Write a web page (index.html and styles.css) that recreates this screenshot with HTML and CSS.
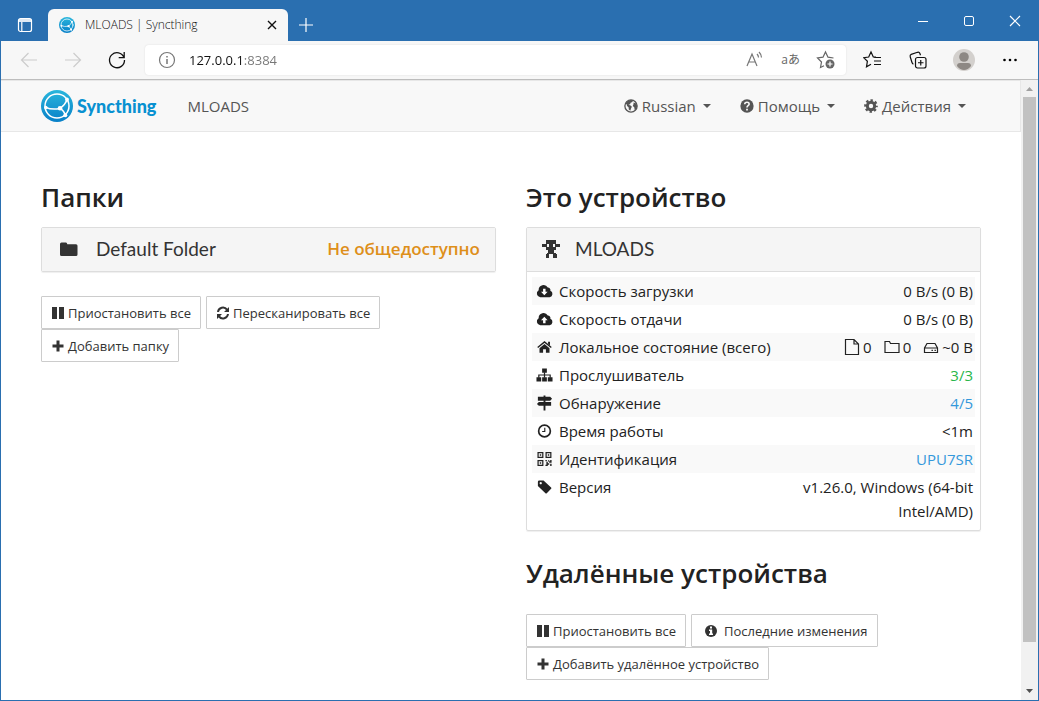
FILE: index.html
```html
<!DOCTYPE html>
<html lang="ru">
<head>
<meta charset="utf-8">
<title>MLOADS | Syncthing</title>
<link rel="stylesheet" href="styles.css">
</head>
<body>
<svg class="defs" aria-hidden="true">
  <defs>
    <linearGradient id="brand-fill" x1="0" y1="0" x2="0" y2="1"><stop offset="0" stop-color="#29b6dc"/><stop offset="1" stop-color="#0880c8"/></linearGradient>
  </defs>
  <symbol id="logo" viewBox="0 0 32 32">
    <circle cx="16" cy="16" r="16" fill="url(#brand-fill)"/>
    <g fill="none" stroke="#fff" stroke-width="1.500" stroke-linecap="round">
      <circle cx="16" cy="16" r="12"/>
      <path d="M19 18.500Q24 15 26.300 9.500M19 18.500Q11 20 4.800 17.500M19 18.500q4 2 5.500 7"/>
    </g>
    <g fill="#fff"><circle cx="19" cy="18.300" r="2.300"/><circle cx="26" cy="9.500" r="1.900"/><circle cx="24.300" cy="25.300" r="2"/><circle cx="4.800" cy="17.500" r="1.800"/></g>
  </symbol>
  <symbol id="globe" viewBox="0 0 16 16"><circle cx="8" cy="8" r="7" fill="none" stroke="currentColor" stroke-width="1.500"/><path d="M4 2.500 7.500 1l3 .5-1 2-2 .7-.5 1.800-2 .5 2.500.8 1.500 1.500-1 2-.8 2.700L5.500 12l-.3-2.500L3.500 8 3 6 1.600 5.500zM11 4l3 1 1 3-.8 3-2 1.500-.5-3L10 8l.8-2z" fill="currentColor"/></symbol>
  <symbol id="help" viewBox="0 0 16 16"><circle cx="8" cy="8" r="7.600" fill="currentColor"/><path d="M5.400 6c.2-3.200 5.200-3 5 0C10.300 7.600 8 7.800 8 9.600" fill="none" stroke="#f8f8f8" stroke-width="1.900"/><path d="M7 11h2v2H7z" fill="#f8f8f8"/></symbol>
  <symbol id="gear" viewBox="0 0 16 16"><circle cx="8" cy="8" r="4.200" fill="none" stroke="currentColor" stroke-width="3.400"/><circle cx="8" cy="8" r="6.500" fill="none" stroke="currentColor" stroke-width="2.600" stroke-dasharray="2.700 2.405" stroke-dashoffset="1.350"/></symbol>
  <symbol id="caret" viewBox="0 0 8 4"><path d="M0 0h8L4 4z" fill="currentColor"/></symbol>
  <symbol id="folder" viewBox="0 0 18 16"><path d="M0 3Q0 1.500 1.500 1.500h4.500Q7 1.500 7.300 3.200H16q1.500 0 1.500 1.500V13.500Q17.500 15 16 15H1.500Q0 15 0 13.500z" fill="currentColor"/></symbol>
  <symbol id="pause" viewBox="0 0 14 14"><path d="M1 1h5v12H1zM8 1h5v12H8z" fill="currentColor"/></symbol>
  <symbol id="refresh" viewBox="0 0 14 14"><path d="M2 6a5 5 0 0 1 9-2.400M12 8a5 5 0 0 1-9 2.400" fill="none" stroke="currentColor" stroke-width="2"/><path d="M13 1v5H8zM1 13V8h5z" fill="currentColor"/></symbol>
  <symbol id="plus" viewBox="0 0 14 14"><path d="M5.500 1.500h3v4h4v3h-4v4h-3v-4h-4v-3h4z" fill="currentColor"/></symbol>
  <symbol id="info" viewBox="0 0 14 14"><circle cx="7" cy="7" r="6" fill="currentColor"/><path d="M6 2.500h2v2H6zM5 5.500h3.200v4H9V11H5V9.500h1V7H5z" fill="#fff"/></symbol>
  <symbol id="identicon" viewBox="0 0 18 18" shape-rendering="crispEdges"><path d="M4 0h10v4h4v3h-4v3h-2v3h2v1h1v4h-4v-4H7v4H4v-4h1v-1h1v-3H4V7H0V4h4z" fill="currentColor"/><path d="M5 4h2v3H5zM11 4h2v3h-2z" fill="#f5f5f5"/></symbol>
  <symbol id="cloud-down" viewBox="0 0 18 16"><path d="M4.500 14.500a4 4 0 0 1-1.700-7.400 5.200 5.200 0 0 1 9.700-2.700 2.700 2.700 0 0 1 2.700 3.400 3.500 3.500 0 0 1-.7 6.700z" fill="currentColor"/><path d="M7.500 5.500h2.600v3.300h2.200L8.800 12.500 5.300 8.800h2.200z" fill="#fff"/></symbol>
  <symbol id="cloud-up" viewBox="0 0 18 16"><path d="M4.500 14.500a4 4 0 0 1-1.700-7.400 5.200 5.200 0 0 1 9.700-2.700 2.700 2.700 0 0 1 2.700 3.400 3.500 3.500 0 0 1-.7 6.700z" fill="currentColor"/><path d="M7.500 12.500h2.600V9.200h2.200L8.800 5.500 5.300 9.200h2.200z" fill="#fff"/></symbol>
  <symbol id="home" viewBox="0 0 18 16"><path d="M1.800 8.600 9 2.600l7.200 6" fill="none" stroke="currentColor" stroke-width="1.500"/><path d="M12.800 2.500h2v4l-2-1.600zM9 4.800l5.300 4.400V14h-3.800v-3.600h-3V14H3.700V9.200z" fill="currentColor"/></symbol>
  <symbol id="sitemap" viewBox="0 0 18 16"><path d="M6.500 1h5v4.500h-5zM.5 10.500h5V15h-5zM6.500 10.500h5V15h-5zM12.500 10.500h5V15h-5z" fill="currentColor"/><path d="M9 5v6M3 11V8h12v3" fill="none" stroke="currentColor" stroke-width="1.300"/></symbol>
  <symbol id="signs" viewBox="0 0 18 16"><path d="M8 0h2v1.500h5L17 3.500l-2 2h-5V7h6v4h-6v5H8v-5H3L1 9l2-2h5V5.500H2v-4h6z" fill="currentColor"/></symbol>
  <symbol id="clock" viewBox="0 0 18 16"><circle cx="9" cy="8" r="6.200" fill="none" stroke="currentColor" stroke-width="1.800"/><path d="M9.300 4.500v4H6.500" fill="none" stroke="currentColor" stroke-width="1.200"/></symbol>
  <symbol id="qr" viewBox="0 0 18 16"><path d="M2.200 1.200h5v5h-5zM10.700 1.200h5v5h-5zM2.200 9.700h5v5h-5z" fill="none" stroke="currentColor" stroke-width="1.300"/><path d="M4 3h1.500v1.500H4zM12.500 3H14v1.500h-1.500zM4 11.500h1.500V13H4zM10 9h1.500v1.500H10zM13 9h1v1.500h1V9h1.500v3H14v-1h-1zM11 11h1.500v1.500H14V14h-1.500v1.300H10V14h1zM15 13h1.500v2.300H15z" fill="currentColor"/></symbol>
  <symbol id="tag" viewBox="0 0 18 16"><path fill-rule="evenodd" d="M2 2.500Q2 1 3.500 1H8l8 7.500q.7.700 0 1.400l-4.600 4.700q-.7.700-1.400 0L2 7zM5 2.700a1.200 1.200 0 1 0 .01 0z" fill="currentColor"/></symbol>
  <symbol id="file-o" viewBox="0 0 16 18"><path d="M1.500 1.500h8.500L14.500 6v10.500h-13zM10 1.500V6h4.500" fill="none" stroke="currentColor" stroke-width="1.200"/></symbol>
  <symbol id="folder-o" viewBox="0 0 16 18"><path d="M1 14.500V3.500h4.500l1 2h8.500v9z" fill="none" stroke="currentColor" stroke-width="1.200"/></symbol>
  <symbol id="disk-o" viewBox="0 0 16 18"><path d="M1.500 14.500V10L4 5.500h8L14.500 10v4.500zM1.500 10h13" fill="none" stroke="currentColor" stroke-width="1.200"/><path d="M8.500 11.700h1.400v1.400H8.500zM11.500 11.700h1.400v1.400h-1.400z" fill="currentColor"/></symbol>
  <symbol id="triangle" viewBox="0 0 7 4"><path d="M0 4h7L3.500 0z" fill="currentColor"/></symbol>
</svg>

<div class="window">
  <header class="titlebar">
    <button class="tab-actions" aria-label="Меню вкладок"><svg viewBox="0 0 16 16"><rect x="1.500" y="1.500" width="13" height="13" rx="2" fill="none" stroke="#fff" stroke-width="1.200"/><path d="M2 2h12v3H2z" fill="#fff" opacity=".85"/><path d="M4.800 5v9" stroke="#fff" stroke-width="1.200"/></svg></button>
    <div class="tab">
      <svg class="tab-logo"><use href="#logo"/></svg>
      <span class="tab-title">MLOADS | Syncthing</span>
      <button aria-label="Закрыть вкладку"><svg viewBox="0 0 16 16"><path d="M4 4l8 8M12 4l-8 8" stroke="#111" stroke-width="1.400"/></svg></button>
    </div>
    <button class="new-tab" aria-label="Новая вкладка"><svg viewBox="0 0 16 16"><path d="M8 1v14M1 8h14" stroke="#fff" stroke-width="1.200"/></svg></button>
    <div class="window-controls">
      <button aria-label="Свернуть"><svg viewBox="0 0 16 16"><path d="M3 8.500h10" stroke="#fff"/></svg></button>
      <button aria-label="Развернуть"><svg viewBox="0 0 16 16"><rect x="3.500" y="3.500" width="9" height="9" rx="1.500" fill="none" stroke="#fff"/></svg></button>
      <button aria-label="Закрыть"><svg viewBox="0 0 16 16"><path d="M3 3l10 10M13 3 3 13" stroke="#fff" stroke-width="1.200"/></svg></button>
    </div>
  </header>

  <div class="toolbar">
    <div class="history">
      <button aria-label="Назад" disabled><svg viewBox="0 0 20 20"><path d="M18 10H2.500M9.500 3l-7 7 7 7" fill="none" stroke="#ccc" stroke-width="1.200"/></svg></button>
      <button aria-label="Вперёд" disabled><svg viewBox="0 0 20 20"><path d="M2 10h15.500M10.500 3l7 7-7 7" fill="none" stroke="#ccc" stroke-width="1.200"/></svg></button>
      <button aria-label="Обновить"><svg viewBox="0 0 20 20"><path d="M17 7.500A7.500 7.500 0 1 0 17.500 10M17.200 2v5.700h-5.500" fill="none" stroke="#111" stroke-width="1.300"/></svg></button>
    </div>
    <div class="address">
      <svg viewBox="0 0 20 20"><circle cx="10" cy="10" r="7.500" fill="none" stroke="#777" stroke-width="1.200"/><path d="M10 9v5M10 6v1.500" stroke="#777" stroke-width="1.500"/></svg>
      <input type="text" value="127.0.0.1:8384" aria-label="Адресная строка">
      <button aria-label="Прочесть вслух"><svg viewBox="0 0 20 20"><path d="M2 16 7 4 12 16M4 12h6M12 4q1.500 1.500 1.500 3.500M14 2q2.500 2.500 2.500 5.500" fill="none" stroke="#777" stroke-width="1.200"/></svg></button>
      <button class="translate" aria-label="Перевести">aあ</button>
      <button aria-label="Добавить в избранное"><svg viewBox="0 0 20 20"><path d="M17.500 8 12 7.200 9.500 2 7 7.200 1.500 8l4 4-1 5.500L8 15.700" fill="none" stroke="#666" stroke-width="1.200"/><circle cx="14" cy="14" r="4.500" fill="#666"/><path d="M14 11.500v5M11.500 14h5" stroke="#fff" stroke-width="1.200"/></svg></button>
    </div>
    <div class="browser-actions">
      <button aria-label="Избранное"><svg viewBox="0 0 20 20"><path d="M13 7.200 10.300 7 8 2 5.700 7l-5 .7 3.700 3.500-.9 5.600L8 14.200M11 7.500h7M11 11h7M11 14.500h7" fill="none" stroke="#111" stroke-width="1.200"/></svg></button>
      <button aria-label="Коллекции"><svg viewBox="0 0 20 20"><rect x="7.500" y="7.500" width="10.500" height="10.500" rx="2" fill="none" stroke="#111" stroke-width="1.200"/><path d="M12.750 10v5.500M10 12.750h5.500M5.500 14Q4.500 14 4 12.500L2.200 6.700q-.5-1.700 1-2.300L9.500 2.300q1.700-.5 2.300 1l.7 2" fill="none" stroke="#111" stroke-width="1.200"/></svg></button>
      <button aria-label="Профиль" class="profile"><svg viewBox="0 0 22 22"><circle cx="11" cy="11" r="11" fill="#d3d0cd"/><circle cx="11" cy="8" r="4.800" fill="#8d8884"/><path d="M4 17q0-3 3-3h8q3 0 3 3-3 4-7 4t-7-4z" fill="#8d8884"/></svg></button>
      <button aria-label="Настройки"><svg viewBox="0 0 20 20"><circle cx="4.500" cy="10" r="1.300"/><circle cx="10" cy="10" r="1.300"/><circle cx="15.500" cy="10" r="1.300"/></svg></button>
    </div>
  </div>

  <div class="viewport">
    <div class="page">
      <nav class="navbar">
        <a class="brand" href="#"><svg><use href="#logo"/></svg><span>Syncthing</span></a>
        <span class="device-name">MLOADS</span>
        <div class="menus">
          <button><svg class="icon"><use href="#globe"/></svg>Russian<svg class="caret"><use href="#caret"/></svg></button>
          <button><svg class="icon"><use href="#help"/></svg>Помощь<svg class="caret"><use href="#caret"/></svg></button>
          <button><svg class="icon"><use href="#gear"/></svg>Действия<svg class="caret"><use href="#caret"/></svg></button>
        </div>
      </nav>

      <main class="columns">
        <section>
          <h3>Папки</h3>
          <div class="panel">
            <button class="panel-heading"><svg><use href="#folder"/></svg><span class="name">Default Folder</span><span class="status">Не общедоступно</span></button>
          </div>
          <div class="actions">
            <button><svg><use href="#pause"/></svg>Приостановить все</button>
            <button><svg><use href="#refresh"/></svg>Пересканировать все</button>
            <button><svg><use href="#plus"/></svg>Добавить папку</button>
          </div>
        </section>

        <section>
          <h3>Это устройство</h3>
          <div class="panel">
            <button class="panel-heading open"><svg><use href="#identicon"/></svg><span class="name">MLOADS</span></button>
            <div class="panel-body">
              <table>
                <tbody>
                  <tr><th scope="row"><svg><use href="#cloud-down"/></svg>Скорость загрузки</th><td>0 B/s (0 B)</td></tr>
                  <tr><th scope="row"><svg><use href="#cloud-up"/></svg>Скорость отдачи</th><td>0 B/s (0 B)</td></tr>
                  <tr><th scope="row"><svg><use href="#home"/></svg>Локальное состояние (всего)</th><td><div class="totals"><span><svg><use href="#file-o"/></svg>0</span><span><svg><use href="#folder-o"/></svg>0</span><span><svg><use href="#disk-o"/></svg>~0 B</span></div></td></tr>
                  <tr><th scope="row"><svg><use href="#sitemap"/></svg>Прослушиватель</th><td><a class="ok" href="#">3/3</a></td></tr>
                  <tr><th scope="row"><svg><use href="#signs"/></svg>Обнаружение</th><td><a href="#">4/5</a></td></tr>
                  <tr><th scope="row"><svg><use href="#clock"/></svg>Время работы</th><td>&lt;1m</td></tr>
                  <tr><th scope="row"><svg><use href="#qr"/></svg>Идентификация</th><td><a href="#">UPU7SR</a></td></tr>
                  <tr><th scope="row"><svg><use href="#tag"/></svg>Версия</th><td>v1.26.0, Windows (64-bit Intel/AMD)</td></tr>
                </tbody>
              </table>
            </div>
          </div>

          <h3>Удалённые устройства</h3>
          <div class="actions">
            <button><svg><use href="#pause"/></svg>Приостановить все</button>
            <button class="wide-icon"><svg><use href="#info"/></svg>Последние изменения</button>
            <button><svg><use href="#plus"/></svg>Добавить удалённое устройство</button>
          </div>
        </section>
      </main>
    </div>
    <div class="scrollbar">
      <svg><use href="#triangle"/></svg>
      <div class="track"><div class="thumb"></div></div>
      <svg class="down"><use href="#triangle"/></svg>
    </div>
  </div>
</div>
</body>
</html>
```
FILE: styles.css
```css
* { box-sizing: border-box; }

body {
  margin: 0;
  color: #222;
  font: 400 15px/24px "Open Sans", "Noto Sans", "Noto Sans CJK JP", sans-serif;
}

button {
  padding: 0;
  border: 0;
  background: none;
  color: inherit;
  font: inherit;
}

svg { display: block; flex: none; }
.defs { position: absolute; width: 0; height: 0; }
a { color: #3498db; text-decoration: none; }

.window {
  display: flex;
  flex-direction: column;
  height: 100vh;
  border: solid #2a6fb0;
  border-width: 0 1px 1px;
  overflow: hidden;
}

/* Title bar */
.titlebar {
  display: flex;
  align-items: flex-end;
  flex: none;
  height: 41px;
  background: #2a6fb0;
}
.tab-actions { width: 47px; padding: 0 0 8px 16px; }
.titlebar svg { width: 16px; height: 16px; }
.tab {
  display: flex;
  align-items: center;
  width: 240px;
  height: 32px;
  padding: 0 8px 0 11px;
  gap: 10px;
  border-radius: 6px 6px 0 0;
  background: #f7f7f7;
  color: #111;
  font-size: 12px;
  font-weight: 300;
}
.tab-title { flex: 1; }
.new-tab { padding: 0 0 8px 10px; }
.window-controls {
  display: flex;
  align-self: center;
  gap: 30px;
  margin-left: auto;
  padding-right: 15px;
}

/* Toolbar */
.toolbar {
  display: flex;
  align-items: center;
  flex: none;
  height: 39px;
  border-bottom: 1px solid #bdbdbd;
  background: #f7f7f7;
}
.toolbar svg { width: 20px; height: 20px; }
.history { display: flex; gap: 24px; padding: 0 18px; }
.address {
  display: flex;
  align-items: center;
  flex: 1;
  gap: 16px;
  height: 30px;
  padding: 0 10px 0 12px;
  border-radius: 4px;
  background: #fff;
  box-shadow: 0 0 2px #ddd;
}
.address > svg { margin-right: -4px; }
.address input {
  flex: 1;
  min-width: 0;
  padding: 0;
  border: 0;
  outline: 0;
  background: linear-gradient(90deg, #111 54px, #777 54px) text;
  color: transparent;
  font: 400 13px/20px "Open Sans", sans-serif;
}
.translate { color: #666; font-size: 12px; line-height: 20px; }
.browser-actions { display: flex; align-items: center; gap: 25px; padding: 0 18px 0 17px; }
.toolbar .profile svg { width: 22px; height: 22px; }

/* Viewport */
.viewport { display: flex; flex: 1; min-height: 0; background: #fff; }
.page { flex: 1; overflow: hidden; }

.scrollbar {
  display: flex;
  flex-direction: column;
  align-items: center;
  width: 17px;
  padding: 7px 2px;
  background: #f1f1f1;
  color: #a0a0a0;
}
.scrollbar svg { width: 7px; height: 4px; }
.scrollbar .down { color: #505050; transform: rotate(180deg); }
.track { align-self: stretch; flex: 1; margin: 6px 0; }
.thumb { height: 93%; background: #c1c1c1; }

/* Navigation */
.navbar {
  display: flex;
  align-items: center;
  height: 52px;
  padding: 0 54px 0 40px;
  border: solid #e7e7e7;
  border-width: 1px 1px 1px 0;
  background: #f8f8f8;
  color: #555;
}
.brand {
  display: flex;
  align-items: center;
  gap: 4px;
  color: #0891d1;
  font: 900 18px/24px Lato, sans-serif;
}
.brand svg { width: 32px; height: 32px; }
.device-name { margin-left: 31px; }
.menus { display: flex; gap: 29px; margin-left: auto; }
.menus button { display: flex; align-items: center; }
.icon { width: 14px; height: 14px; margin-right: 4px; }
.caret { width: 8px; height: 4px; margin-left: 7px; }

/* Content */
.columns {
  display: grid;
  grid-template-columns: repeat(2, minmax(0, 1fr));
  gap: 30px;
  padding: 47px 40px 0;
}
h3 { margin: 0 0 12px; font-size: 26px; font-weight: 600; line-height: 36px; }

.panel {
  margin-bottom: 24px;
  border: 1px solid #ddd;
  border-radius: 2px;
  box-shadow: 0 1px 1px #0001;
}
.panel-heading {
  display: flex;
  align-items: center;
  width: 100%;
  height: 43px;
  padding: 0 15px 2px 18px;
  background: #f5f5f5;
  color: #333;
}
.panel-heading svg { width: 18px; height: 16px; margin-right: 18px; }
.panel-heading.open { height: 44px; padding-left: 15px; border-bottom: 1px solid #ddd; }
.panel-heading.open svg { height: 18px; margin-right: 15px; }
.name { font-family: Lato, sans-serif; font-size: 19px; }
.status { margin-left: auto; color: #de8f1a; font-size: 17px; font-weight: 600; }
.panel-body { padding: 5px; }

table { width: 100%; border-collapse: collapse; }
tr:nth-child(odd) { background: #f9f9f9; }
th, td { padding: 2px; vertical-align: top; }
th {
  display: flex;
  align-items: center;
  padding-left: 4px;
  font-weight: inherit;
  white-space: nowrap;
}
th svg { width: 17px; height: 16px; margin-right: 6px; }
td { text-align: right; }
.ok { color: #29b64a; }
.totals { display: flex; justify-content: flex-end; gap: 12px; }
.totals span { display: flex; align-items: center; gap: 3px; }
.totals svg { width: 16px; height: 18px; }

.actions { display: flex; flex-wrap: wrap; gap: 0 5px; }
.actions button {
  display: flex;
  align-items: center;
  gap: 3px;
  height: 33px;
  padding: 0 9px;
  border: 1px solid #ccc;
  border-radius: 1px;
  background: #fff;
  color: #333;
  font-size: 13px;
}
.actions svg { width: 14px; height: 14px; }
.actions .wide-icon { gap: 6px; padding-left: 12px; }
h3 + .actions { padding-top: 11px; }
```
